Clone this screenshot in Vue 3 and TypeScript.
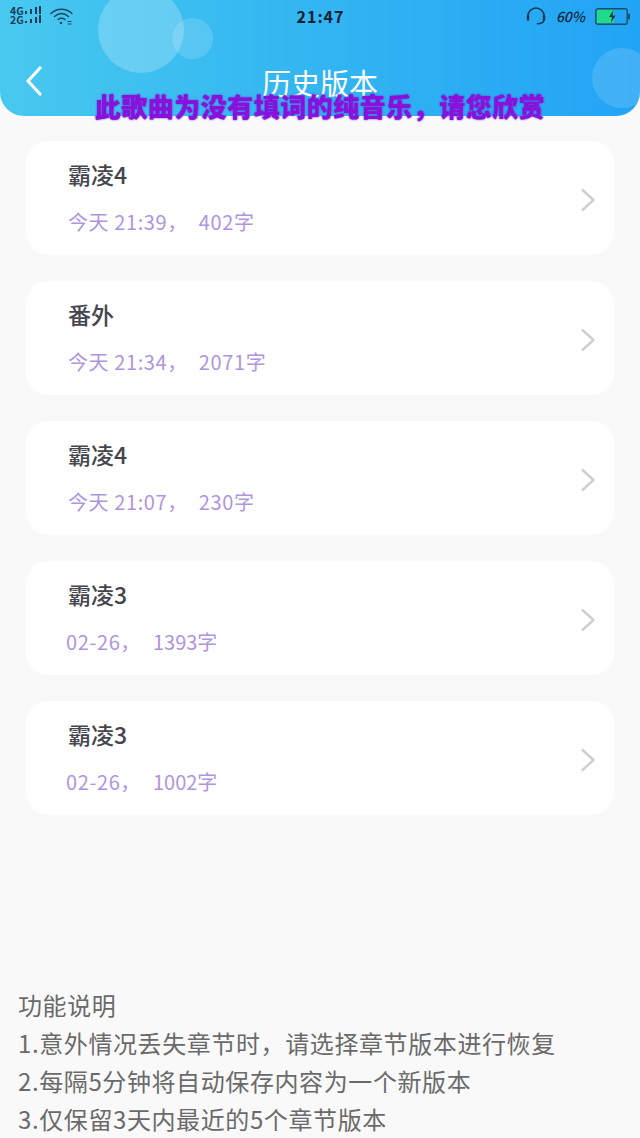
<template>
  <div class="page">
    <div class="top">
      <header class="header">
        <!-- 背景气泡 -->
        <i class="bubble bubble-big"></i>
        <i class="bubble bubble-small"></i>
        <i class="bubble bubble-right"></i>

        <div class="status">
          <div class="status-left">
            <div class="net">
              <div class="net-row">
                <span>4G</span>
                <svg width="18" height="9" viewBox="0 0 18 9"><path d="M1 5h2v3H1zM6 3h2v5H6zM11 1h2v7h-2zM15 0h2v8h-2z" fill="#1c3c55" /></svg>
              </div>
              <div class="net-row">
                <span>2G</span>
                <svg width="18" height="9" viewBox="0 0 18 9"><path d="M1 6h2v2H1zM6 4h2v4H6zM11 2h2v6h-2zM15 0h2v8h-2z" fill="#1c3c55" /></svg>
              </div>
            </div>
            <svg class="wifi" width="24" height="18" viewBox="0 0 24 18" fill="none" stroke="#1c4560" stroke-width="1.4" stroke-linecap="round">
              <path d="M1 6.500C7 .8 16 .8 22 6.500" />
              <path d="M4.500 9.500C9 5.600 14 5.600 18.500 9.500" />
              <path d="M8 12.500c2.500-1.800 4.500-1.800 7 0" />
              <circle cx="11" cy="16" r="1.200" fill="#1c4560" stroke="none" />
              <path d="M18 14.500h3M18 17h3" stroke-width="1.200" />
            </svg>
          </div>
          <div class="clock">21:47</div>
          <div class="status-right">
            <svg width="20" height="18" viewBox="0 0 20 18" fill="none" stroke="#17364f" stroke-width="1.500" stroke-linecap="round">
              <path d="M2 10V9a8 8 0 0 1 16 0v1" />
              <path d="M2 9v3.500M18 9v3.500" stroke-width="2.400" />
              <path d="M18 13c-.6 2.600-3 3.800-6.500 3.800" />
            </svg>
            <span class="percent">60%</span>
            <svg width="36" height="17" viewBox="0 0 36 17">
              <rect x=".8" y=".8" width="31.400" height="15.400" rx="2" fill="none" stroke="#1d4f66" stroke-width="1.400" />
              <rect x="2" y="2" width="17" height="13" fill="#1fdc8a" />
              <rect x="33" y="5.500" width="2" height="6" rx="1" fill="#1d4f66" />
              <path d="M18.500 2l-4.500 7h3l-1 6 4.500-7.500h-3z" fill="#16384a" />
            </svg>
          </div>
        </div>

        <div class="nav">
          <svg class="back" width="18" height="30" viewBox="0 0 18 30" fill="none" stroke="#fff" stroke-width="3.200" stroke-linecap="round" stroke-linejoin="round">
            <path d="M15 2L3 15l12 13" />
          </svg>
          <h1 class="title">历史版本</h1>
        </div>
      </header>
      <div class="lyric">此歌曲为没有填词的纯音乐，请您欣赏</div>
    </div>

    <ul class="list">
      <li v-for="(item, i) in versions" :key="i" class="card">
        <div class="card-text">
          <div class="name">{{ item.name }}</div>
          <div class="meta" :class="{ 'meta-date': item.dateOnly }">
            <span>{{ item.time }}，</span><span class="count">{{ item.count }}字</span>
          </div>
        </div>
        <svg class="arrow" width="16" height="24" viewBox="0 0 16 24" fill="none" stroke="#cfcfcf" stroke-width="2.400" stroke-linecap="round" stroke-linejoin="round">
          <path d="M2.500 2l11 10-11 10" />
        </svg>
      </li>
    </ul>

    <footer class="notes">
      <p>功能说明</p>
      <p v-for="line in notes" :key="line">{{ line }}</p>
    </footer>
  </div>
</template>

<script setup lang="ts">
interface Version {
  name: string;
  time: string;
  count: number;
  dateOnly?: boolean;
}

const versions: Version[] = [
  { name: "霸凌4", time: "今天 21:39", count: 402 },
  { name: "番外", time: "今天 21:34", count: 2071 },
  { name: "霸凌4", time: "今天 21:07", count: 230 },
  { name: "霸凌3", time: "02-26", count: 1393, dateOnly: true },
  { name: "霸凌3", time: "02-26", count: 1002, dateOnly: true },
];

const notes = [
  "1.意外情况丢失章节时，请选择章节版本进行恢复",
  "2.每隔5分钟将自动保存内容为一个新版本",
  "3.仅保留3天内最近的5个章节版本",
];
</script>

<style>
html,
body {
  margin: 0;
  background: #f9f9f9;
}
</style>

<style scoped>
.page {
  display: flex;
  flex-direction: column;
  height: 1138px;
  overflow: hidden;
  background: #f9f9f9;
  font-family: "Noto Sans CJK SC", "Noto Sans", sans-serif;
}

.top {
  position: relative;
}

.header {
  position: relative;
  height: 116px;
  overflow: hidden;
  border-radius: 0 0 24px 24px;
  background: linear-gradient(90deg, #47c9ef 0%, #32b5f1 50%, #22a4f6 100%);
}

.bubble {
  position: absolute;
  border-radius: 50%;
}

.bubble-big {
  left: 98px;
  top: -13px;
  width: 86px;
  height: 86px;
  background: rgba(255, 255, 255, 0.22);
}

.bubble-small {
  left: 172px;
  top: 18px;
  width: 41px;
  height: 41px;
  background: rgba(255, 255, 255, 0.15);
}

.bubble-right {
  left: 592px;
  top: 48px;
  width: 60px;
  height: 60px;
  background: rgba(255, 255, 255, 0.14);
}

.status {
  position: relative;
  display: flex;
  align-items: center;
  justify-content: space-between;
  height: 32px;
  padding: 0 9px 0 10px;
}

.status-left,
.status-right {
  display: flex;
  align-items: center;
  width: 200px;
}

.status-left {
  gap: 8px;
}

.status-right {
  justify-content: flex-end;
  gap: 10px;
}

.net {
  display: flex;
  flex-direction: column;
  margin-top: -2px;
}

.net-row {
  display: flex;
  align-items: center;
  height: 9px;
  font-size: 10.500px;
  line-height: 9px;
  font-weight: 700;
  color: #1c3c55;
}

.wifi {
  margin-top: -1px;
}

.clock {
  font-size: 16px;
  font-weight: 700;
  letter-spacing: 1px;
  color: #10202e;
}

.percent {
  font-size: 14px;
  font-weight: 500;
  font-style: italic;
  color: #10263a;
}

.nav {
  position: relative;
  height: 84px;
}

.back {
  position: absolute;
  left: 25px;
  top: 34px;
}

.title {
  margin: 0;
  padding-top: 30px;
  text-align: center;
  font-size: 29px;
  line-height: 40px;
  font-weight: 400;
  color: #fff;
}

.lyric {
  position: absolute;
  left: 0;
  right: 0;
  top: 88px;
  text-align: center;
  font-size: 26px;
  line-height: 36px;
  letter-spacing: 0.5px;
  font-weight: 900;
  white-space: nowrap;
  color: #8b10dc;
  text-shadow: 0 0 2px #5e21d0;
}

.list {
  display: flex;
  flex-direction: column;
  gap: 26px;
  margin: 25px 0 0;
  padding: 0 26px;
  list-style: none;
}

.card {
  display: flex;
  align-items: center;
  justify-content: space-between;
  height: 114px;
  padding: 0 18px 0 42px;
  border-radius: 22px;
  background: #fff;
}

.card-text {
  display: flex;
  flex-direction: column;
  gap: 14px;
}

.name {
  font-size: 23px;
  line-height: 34px;
  font-weight: 500;
  color: #45454d;
}

.meta {
  font-size: 20px;
  line-height: 34px;
  letter-spacing: 0.6px;
  color: #b095dd;
  white-space: nowrap;
}

.meta-date {
  margin-left: -2px;
}

.count {
  margin-left: 11px;
}

.meta-date .count {
  margin-left: 12px;
  letter-spacing: 0;
}

.arrow {
  margin-top: 4px;
}

.notes {
  margin-top: auto;
  padding: 0 0 0 18px;
  font-size: 24px;
  line-height: 38px;
  letter-spacing: 0.6px;
  color: #6a6a6a;
}

.notes p {
  margin: 0;
  white-space: nowrap;
}
</style>
